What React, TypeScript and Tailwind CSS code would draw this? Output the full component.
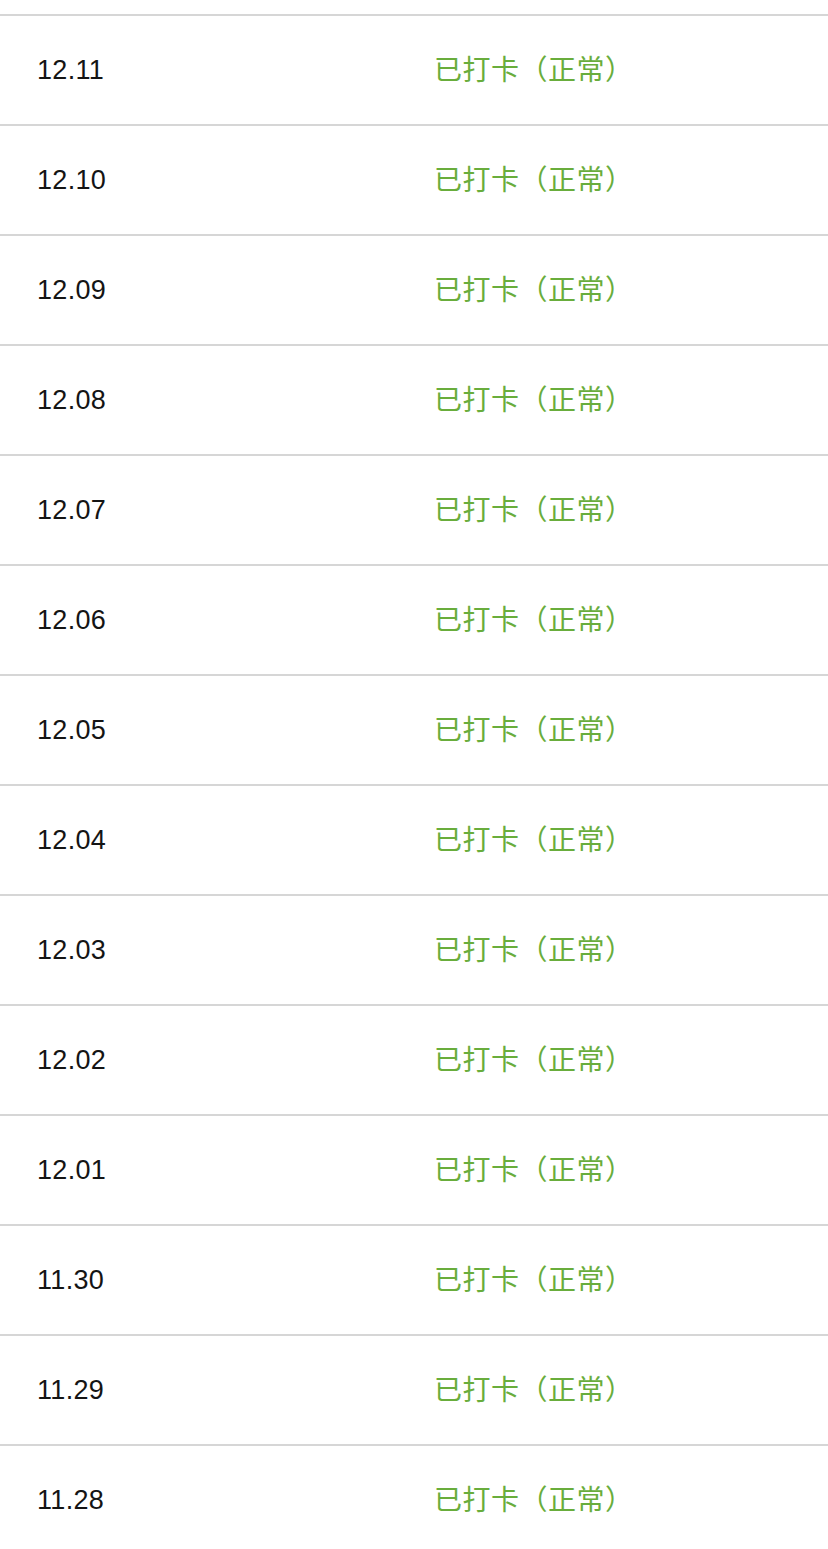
import React from "react";

const dates = [
  "12.11", "12.10", "12.09", "12.08", "12.07", "12.06", "12.05",
  "12.04", "12.03", "12.02", "12.01", "11.30", "11.29", "11.28",
];

export default function App() {
  return (
    <div className="w-[828px] h-[1549px] overflow-hidden bg-white pt-[14px]" style={{ fontFamily: '"Liberation Sans", "Noto Sans CJK SC", sans-serif' }}>
      {dates.map((d) => (
        <div key={d} className="border-t-2 border-[#d6d6d6] h-[110px] flex items-center">
          <div className="w-[434px] pl-[37px] text-[27px] text-[#141414] tracking-[0.3px]">{d}</div>
          <div className="relative -top-[2px] text-[28px] leading-none text-[#69ad3c] tracking-[0.5px]" style={{ fontFamily: '"Noto Sans CJK SC", sans-serif' }}>已打卡（正常）</div>
        </div>
      ))}
    </div>
  );
}
